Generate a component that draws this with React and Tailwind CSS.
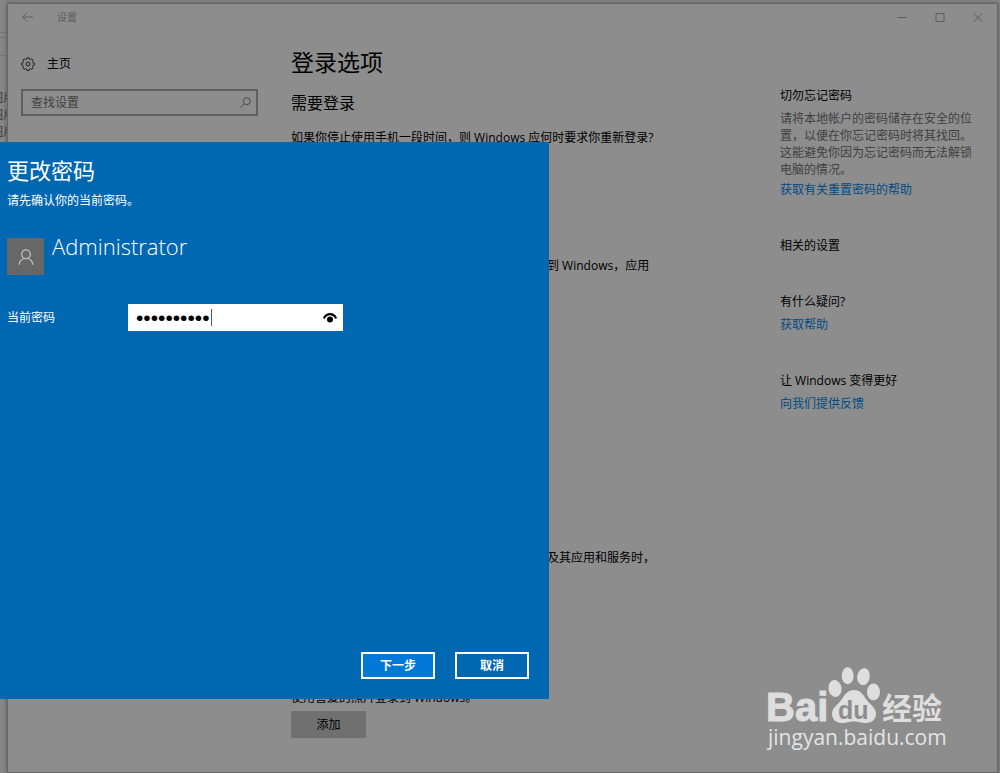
import { useState } from "react";

function GearIcon() {
  return (
    <svg className="h-[14px] w-[14px]" viewBox="0 0 14 14" fill="none" stroke="#1c1c1c" strokeWidth="1" aria-hidden="true">
      <path
        strokeLinejoin="round"
        d="M5.900.8h2.200l.4 1.500 1 .4 1.400-.8 1.400 1.500-.8 1.300.5 1.100 1.300.3v2l-1.400.4-.4 1.100.8 1.300-1.500 1.500-1.300-.8-1 .4-.4 1.400H5.900l-.4-1.400-1-.4-1.400.8-1.400-1.500.8-1.300-.5-1.100L.7 8.100v-2l1.400-.4.4-1.100-.8-1.300 1.500-1.500 1.300.8 1-.4z"
      />
      <circle cx="7" cy="7" r="2" />
    </svg>
  );
}

function TitleBar() {
  return (
    <header className="flex h-[25px] items-center text-[#5c5c5c]">
      <button type="button" aria-label="返回" className="ml-[13px] flex h-4 w-3 items-center justify-center">
        <svg className="h-[10px] w-[11px] shrink-0" viewBox="0 0 11 10" fill="none" stroke="#5c5c5c" aria-hidden="true">
          <path d="M5 .7.800 5 5 9.300M.8 5h10" />
        </svg>
      </button>
      <span className="ml-6 flex-1 text-[10px] leading-4">设置</span>
      <div className="flex items-center gap-7 pr-[14px]">
        <button type="button" aria-label="最小化" className="flex h-4 w-[10px] items-center">
          <svg className="h-[10px] w-[10px]" viewBox="0 0 10 10" stroke="#5c5c5c" aria-hidden="true">
            <path d="M.5 5.500h9" />
          </svg>
        </button>
        <button type="button" aria-label="最大化" className="flex h-4 w-[10px] items-center">
          <svg className="h-[10px] w-[10px]" viewBox="0 0 10 10" fill="none" stroke="#5c5c5c" aria-hidden="true">
            <path d="M1 1.500h8v8H1z" />
          </svg>
        </button>
        <button type="button" aria-label="关闭" className="flex h-4 w-[10px] items-center">
          <svg className="h-[10px] w-[10px]" viewBox="0 0 10 10" stroke="#5c5c5c" aria-hidden="true">
            <path d="m.7 1.200 8.600 8.600M9.300 1.200.7 9.800" />
          </svg>
        </button>
      </div>
    </header>
  );
}

function SideNav() {
  return (
    <nav className="w-[283px] shrink-0 pl-[13px] pt-[25px]">
      <a href="#home" className="flex items-center gap-3 text-xs leading-5 text-black">
        <GearIcon />
        主页
      </a>
      <div className="mt-[15px] flex h-[27px] w-[237px] items-center border-2 border-[#5f5f5f] pl-2 pr-[5px]">
        <input
          type="search"
          aria-label="查找设置"
          placeholder="查找设置"
          className="min-w-0 flex-1 bg-transparent text-xs leading-4 outline-none placeholder:text-[#404040]"
        />
        <svg className="h-[11px] w-[11px]" viewBox="0 0 11 11" fill="none" stroke="#4a4a4a" aria-hidden="true">
          <circle cx="6.800" cy="4.200" r="3.500" />
          <path d="M4.200 6.800.5 10.500" />
        </svg>
      </div>
    </nav>
  );
}

function Related() {
  return (
    <aside className="w-[217px] shrink-0 pt-[59px] text-xs leading-4">
      <h3 className="text-black">切勿忘记密码</h3>
      <p className="mt-[6px] w-[200px] leading-[17px] text-[#404040]">
        请将本地帐户的密码储存在安全的位置，以便在你忘记密码时将其找回。这能避免你因为忘记密码而无法解锁电脑的情况。
      </p>
      <a href="#reset-help" className="mt-1 block text-[#004a83]">获取有关重置密码的帮助</a>
      <h3 className="mt-10 text-black">相关的设置</h3>
      <h3 className="mt-10 text-black">有什么疑问?</h3>
      <a href="#help" className="mt-[7px] block text-[#004a83]">获取帮助</a>
      <h3 className="mt-10 text-black">让 Windows 变得更好</h3>
      <a href="#feedback" className="mt-[7px] block text-[#004a83]">向我们提供反馈</a>
    </aside>
  );
}

function Settings() {
  return (
    <main className="min-w-0 flex-1 text-xs leading-4 text-black">
      <h1 className="pt-[17px] text-[23px] leading-8">登录选项</h1>
      <h2 className="mt-[15px] text-base leading-5">需要登录</h2>
      <p className="mt-[17px] whitespace-nowrap">如果你停止使用手机一段时间，则 Windows 应何时要求你重新登录?</p>
      <p className="mt-28 whitespace-nowrap pl-64">到 Windows，应用</p>
      <p className="mt-[276px] whitespace-nowrap pl-64">及其应用和服务时，</p>
      <p className="mt-[124px] whitespace-nowrap">使用喜爱的照片登录到 Windows。</p>
      <button type="button" className="mt-[5px] h-[27px] w-[75px] bg-[#707070]">添加</button>
    </main>
  );
}

function PasswordDialog() {
  const [password, setPassword] = useState("0123456789");
  return (
    <section
      role="dialog"
      aria-labelledby="dialog-title"
      className="absolute left-0 top-[142px] flex min-h-[557px] w-[549px] flex-col bg-[#0067b3] pb-5 pl-[7px] pr-5 text-white"
    >
      <h2 id="dialog-title" className="pt-3 text-[22px] leading-8">更改密码</h2>
      <p className="mt-[7px] text-xs leading-4">请先确认你的当前密码。</p>
      <div className="mt-[23px] flex gap-2">
        <div className="mt-[6px] flex h-[37px] w-[37px] items-center justify-center bg-[#676767]">
          <svg className="h-4 w-4" viewBox="0 0 16 16" fill="none" stroke="#c4c4c4" strokeWidth="1.200" aria-hidden="true">
            <circle cx="8" cy="5.200" r="4.300" />
            <path d="M1.200 15.800C1.500 12 4.200 9.500 8 9.500s6.500 2.500 6.800 6.300" />
          </svg>
        </div>
        <span className="text-[22px] font-light leading-7">Administrator</span>
      </div>
      <div className="mt-[29px] flex items-center">
        <label htmlFor="current-password" className="w-[121px] text-xs leading-4">当前密码</label>
        <div className="relative flex h-[27px] w-[215px] items-center bg-white pl-2 pr-[6px]">
          <input
            id="current-password"
            type="password"
            value={password}
            onChange={(event) => setPassword(event.target.value)}
            className="h-6 min-w-0 flex-1 bg-transparent font-['Liberation_Sans',sans-serif] text-[21px] text-black outline-none"
          />
          <span className="absolute left-[83px] top-[5px] h-[17px] w-px bg-[#555555]" />
          <button type="button" aria-label="显示密码" className="flex">
            <svg className="h-[10px] w-[14px]" viewBox="0 0 14 10" aria-hidden="true">
              <path d="M.8 5.500C3.600-.3 10.400-.3 13.200 5.500" fill="none" stroke="#000" strokeWidth="2.200" />
              <circle cx="7" cy="6.600" r="3" fill="#000" />
            </svg>
          </button>
        </div>
      </div>
      <div className="mt-auto flex justify-end gap-5 text-xs font-bold leading-4">
        <button type="button" className="h-[27px] w-[74px] border-2 border-white bg-[#0078d7]">下一步</button>
        <button type="button" className="h-[27px] w-[74px] border-2 border-white">取消</button>
      </div>
    </section>
  );
}

function Watermark() {
  return (
    <svg className="absolute left-[765px] top-[665px] h-[88px] w-[185px]" viewBox="0 0 185 88" fill="#dedede" role="img" aria-label="Baidu 经验">
      <text x="1" y="56" fontFamily="Liberation Sans, sans-serif" fontSize="40" fontWeight="700" stroke="#dedede" strokeWidth="1">Bai</text>
      <ellipse cx="70" cy="23.500" rx="6.500" ry="8.500" transform="rotate(-8 70 23.500)" />
      <ellipse cx="82.700" cy="10.700" rx="6" ry="8.500" />
      <ellipse cx="98.500" cy="11.700" rx="6.300" ry="8.500" transform="rotate(10 98.500 11.700)" />
      <ellipse cx="108.500" cy="27" rx="6.500" ry="8.500" />
      <path d="M89 25c6 0 9 4 12 9 4 6 10 8 10 15 0 5-4 9-10 9-5 0-7-1.500-12-1.500S82 58 77 58c-6 0-10-4-10-9 0-7 6-9 10-15 3-5 6-9 12-9z" />
      <text x="73" y="54" fontFamily="Liberation Sans, sans-serif" fontSize="25" fontWeight="700" fill="#8d8d8d">du</text>
      <text x="117" y="54" fontFamily="Noto Sans CJK SC, sans-serif" fontSize="30" fontWeight="700">经验</text>
      <text x="3" y="80" fontFamily="Open Sans, sans-serif" fontSize="21" fill="#e4e4e4">jingyan.baidu.com</text>
    </svg>
  );
}

export default function App() {
  return (
    <div className="relative flex min-h-screen overflow-hidden bg-[#888888] font-['Open_Sans','Noto_Sans_CJK_SC',sans-serif]">
      <div className="w-[7px] shrink-0 overflow-hidden text-[11px] leading-[17px] text-[#3a3030]">
        <div className="mt-8 h-[6px] border-y border-[#777777]" />
        <div className="h-[18px] border-b border-[#777777]" />
        <ul className="-ml-2 mt-[33px] w-6 whitespace-nowrap">
          <li>图片</li>
          <li>图片</li>
          <li>图片</li>
        </ul>
      </div>
      <div className="mr-[2px] mt-[3px] flex min-w-0 flex-1 flex-col border border-[#666666] bg-[#8d8d8d] shadow-[0_0_5px_#555555]">
        <TitleBar />
        <div className="flex flex-1">
          <SideNav />
          <Settings />
          <Related />
        </div>
      </div>
      <PasswordDialog />
      <Watermark />
    </div>
  );
}
